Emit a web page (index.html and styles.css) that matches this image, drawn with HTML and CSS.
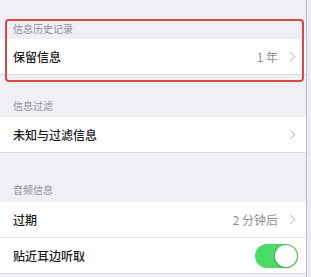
FILE: index.html
```html
<!DOCTYPE html>
<html lang="zh-CN">
<head>
    <meta charset="UTF-8">
    <meta name="viewport" content="width=device-width, initial-scale=1.0">
    <title>信息设置</title>
    <link rel="stylesheet" href="styles.css">
</head>
<body>

    <div class="screen">

        <div class="section first">
            <div class="section-title">信息历史记录</div>
            <div class="group">
                <div class="row">
                    <span class="label">保留信息</span>
                    <span class="value">1 年</span>
                    <span class="chevron"></span>
                </div>
            </div>
            <div class="highlight"></div>
        </div>

        <div class="section">
            <div class="section-title">信息过滤</div>
            <div class="group">
                <div class="row">
                    <span class="label">未知与过滤信息</span>
                    <span class="chevron"></span>
                </div>
            </div>
        </div>

        <div class="section wide">
            <div class="section-title">音频信息</div>
            <div class="group">
                <div class="row">
                    <span class="label">过期</span>
                    <span class="value">2 分钟后</span>
                    <span class="chevron"></span>
                </div>
                <div class="row">
                    <span class="label">贴近耳边听取</span>
                    <span class="switch on"><span class="knob"></span></span>
                </div>
            </div>
        </div>

    </div>

</body>
</html>
```

FILE: styles.css
```css
body {
    margin: 0;
    padding: 0;
    background-color: #ececf0;
    font-family: "Noto Sans CJK SC", "Noto Sans", sans-serif;
    overflow: hidden;
}

.screen {
    width: 306px;
    height: 277px;
    background-color: #efeff4;
    border-right: 1px solid #bcbcc1;
}

.section {
    position: relative;
}

.section-title {
    padding: 25px 13px 5px;
    font-size: 10px;
    line-height: 12px;
    color: #8e8e93;
}

.first .section-title {
    padding-top: 23px;
    padding-bottom: 4px;
}

.wide .section-title {
    padding-top: 31px;
    padding-bottom: 6px;
}

.group {
    background: white;
    border-bottom: 1px solid #dcdce0;
}

.row {
    display: flex;
    align-items: center;
    height: 35px;
    padding: 0 8px 0 13px;
    position: relative;
}

.row + .row {
    border-top: 1px solid #e4e4e8;
}

.label {
    flex: 1;
    font-size: 12px;
    font-weight: 500;
    color: #1c1c1e;
}

.value {
    font-size: 12px;
    color: #8e8e93;
    margin-right: 9px;
}

.chevron {
    width: 6px;
    height: 6px;
    border-top: 1px solid #c4c4c9;
    border-right: 1px solid #c4c4c9;
    transform: rotate(45deg);
    margin-right: 4px;
}

.switch {
    width: 43px;
    height: 24px;
    border-radius: 12px;
    background: #4cd964;
    display: flex;
    justify-content: flex-end;
    align-items: center;
    padding: 1px;
    box-sizing: border-box;
}

.knob {
    width: 22px;
    height: 22px;
    border-radius: 50%;
    background: white;
    box-shadow: 0 0 0 1px rgba(0, 0, 0, 0.12), 0 1px 2px rgba(0, 0, 0, 0.2);
}

.highlight {
    position: absolute;
    top: 19px;
    left: 5px;
    width: 299px;
    height: 63px;
    box-sizing: border-box;
    border: 2px solid #d9474a;
    border-radius: 4px;
}
```
